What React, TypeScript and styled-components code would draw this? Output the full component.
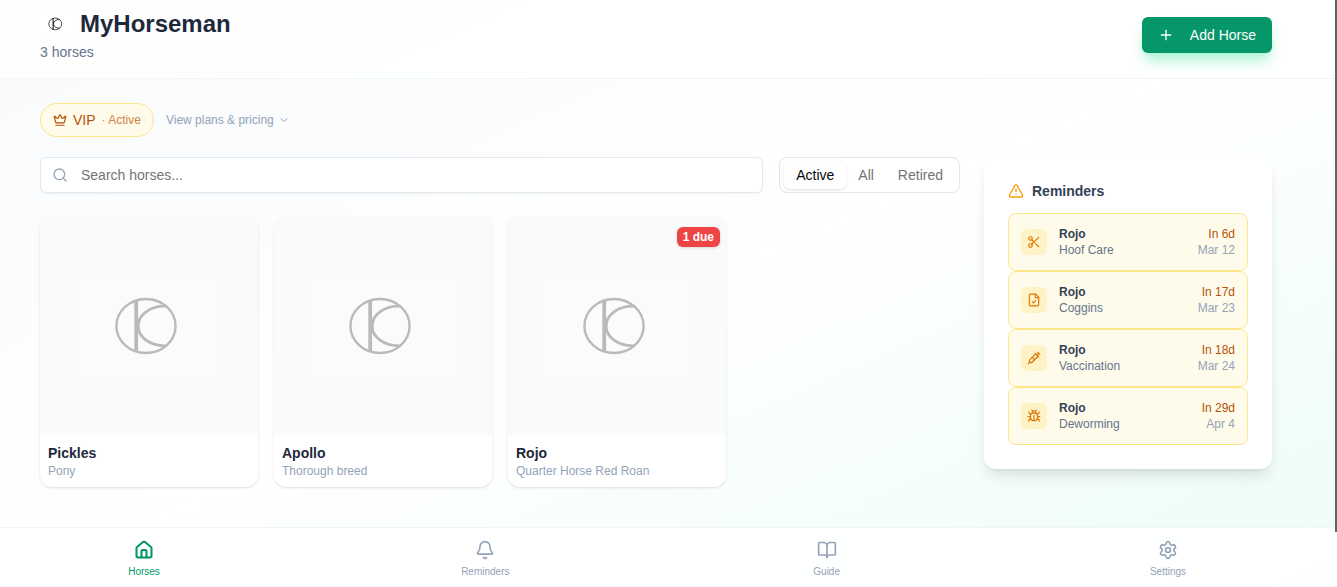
import React, { useState } from "react";
import styled, { createGlobalStyle, css } from "styled-components";
import {
  Bell,
  BookOpen,
  Bug,
  ChevronDown,
  Crown,
  FileCheck,
  House,
  Plus,
  Scissors,
  Search,
  Settings,
  Syringe,
  TriangleAlert,
  type LucideIcon,
} from "lucide-react";

const GlobalStyle = createGlobalStyle`
  *, *::before, *::after { box-sizing: border-box; }
  body {
    margin: 0;
    font-family: "Liberation Sans", Arial, sans-serif;
    font-size: 14px;
    line-height: 20px;
    color: #1e293b;
  }
  h1, h2, h3, p, ul { margin: 0; padding: 0; }
  ul { list-style: none; }
  button, input { font: inherit; }
  svg { display: block; flex: none; }
`;

const Page = styled.div`
  position: relative;
  display: flex;
  flex-direction: column;
  min-height: 100vh;
  background: linear-gradient(to bottom right, #f8fafc, #ffffff 50%, #ecfdf5);
`;

const ScrollThumb = styled.div`
  position: absolute;
  top: 0;
  right: 0;
  bottom: 55px;
  width: 2px;
  background: #5f6363;
`;

const Header = styled.header`
  background: rgba(255, 255, 255, 0.8);
  border-bottom: 1px solid #f1f5f9;
`;

const container = css`
  max-width: 1312px;
  padding-left: 40px;
  padding-right: 40px;
`;

const HeaderInner = styled.div`
  ${container}
  display: flex;
  align-items: center;
  justify-content: space-between;
  padding-top: 8px;
  padding-bottom: 16px;
`;

const Brand = styled.div`
  display: flex;
  align-items: center;
  gap: 8px;
`;

const Title = styled.h1`
  font-size: 24px;
  line-height: 32px;
  font-weight: 700;
`;

const HorseCount = styled.p`
  margin-top: 2px;
  color: #64748b;
`;

const AddButton = styled.button`
  display: flex;
  align-items: center;
  gap: 16px;
  height: 36px;
  padding: 0 16px;
  border: 0;
  border-radius: 6px;
  background: #059669;
  color: #ffffff;
  box-shadow: 0 10px 15px -3px #a7f3d0, 0 4px 6px -4px #a7f3d0;
`;

const Main = styled.main`
  ${container}
  flex: 1;
  width: 100%;
  padding-top: 24px;
  padding-bottom: 40px;
`;

const PlanRow = styled.div`
  display: flex;
  align-items: center;
  gap: 12px;
  margin-bottom: 20px;
`;

const PlanPill = styled.div`
  display: flex;
  align-items: center;
  gap: 6px;
  height: 34px;
  padding: 0 12px;
  border: 1px solid #fde68a;
  border-radius: 17px;
  background: #fffbeb;
  color: #b45309;
`;

const PlanStatus = styled.span`
  font-size: 12px;
  color: #cd853f;
`;

const PlansLink = styled.a`
  display: flex;
  align-items: center;
  gap: 4px;
  font-size: 12px;
  color: #94a3b8;
  text-decoration: none;
`;

const Columns = styled.div`
  display: grid;
  grid-template-columns: minmax(0, 1fr) 288px;
  align-items: start;
  gap: 24px;
`;

const Toolbar = styled.div`
  display: flex;
  gap: 16px;
  margin-bottom: 24px;
`;

const SearchField = styled.label`
  display: flex;
  flex: 1;
  align-items: center;
  gap: 13px;
  height: 36px;
  padding: 0 12px 0 11px;
  border: 1px solid #e2e8f0;
  border-radius: 6px;
  background: #ffffff;
  color: #94a3b8;
  box-shadow: 0 1px 2px rgba(0, 0, 0, 0.05);
`;

const SearchInput = styled.input`
  flex: 1;
  min-width: 0;
  padding: 0;
  border: 0;
  outline: 0;
  background: transparent;
  color: #1e293b;

  &::placeholder {
    color: #757575;
  }
`;

const Tabs = styled.div`
  display: flex;
  height: 36px;
  padding: 3px 4px;
  border: 1px solid #e5e5e5;
  border-radius: 8px;
  background: #ffffff;
`;

const Tab = styled.button<{ $active: boolean }>`
  padding: 0 12px;
  border: 0;
  border-radius: 6px;
  background: ${({ $active }) => ($active ? "#ffffff" : "transparent")};
  color: ${({ $active }) => ($active ? "#0a0a0a" : "#737373")};
  box-shadow: ${({ $active }) =>
    $active ? "0 1px 3px rgba(0, 0, 0, 0.1), 0 1px 2px -1px rgba(0, 0, 0, 0.1)" : "none"};
`;

const HorseGrid = styled.div`
  display: grid;
  grid-template-columns: repeat(4, minmax(0, 1fr));
  gap: 16px;
`;

const HorseCard = styled.article`
  position: relative;
  overflow: hidden;
  border-radius: 12px;
  background: #ffffff;
  box-shadow: 0 1px 3px rgba(0, 0, 0, 0.1), 0 1px 2px -1px rgba(0, 0, 0, 0.1);
`;

const HorsePhoto = styled.div`
  display: flex;
  align-items: center;
  justify-content: center;
  aspect-ratio: 1;
  background: #f8fafc;
`;

const HorseInfo = styled.div`
  padding: 8px;
`;

const HorseName = styled.h3`
  font-size: 14px;
  line-height: 20px;
  font-weight: 700;
`;

const HorseBreed = styled.p`
  font-size: 12px;
  line-height: 16px;
  color: #94a3b8;
`;

const DueBadge = styled.span`
  position: absolute;
  top: 10px;
  right: 6px;
  padding: 0 6px;
  border-radius: 6px;
  background: #ef4444;
  color: #ffffff;
  font-size: 12px;
  line-height: 20px;
  font-weight: 700;
  box-shadow: 0 1px 3px rgba(0, 0, 0, 0.15);
`;

const ReminderPanel = styled.aside`
  padding: 24px;
  border-radius: 12px;
  background: #ffffff;
  box-shadow: 0 10px 15px -3px rgba(0, 0, 0, 0.1), 0 4px 6px -4px rgba(0, 0, 0, 0.1);
`;

const PanelTitle = styled.h2`
  display: flex;
  align-items: center;
  gap: 8px;
  margin-bottom: 12px;
  font-size: 14px;
  line-height: 20px;
  font-weight: 700;
  color: #334155;

  svg {
    color: #f59e0b;
  }
`;

const Reminder = styled.li`
  display: flex;
  align-items: center;
  gap: 12px;
  padding: 12px;
  border: 1px solid #fde68a;
  border-radius: 8px;
  background: #fffbeb;
  font-size: 12px;
  line-height: 16px;
`;

const ReminderIcon = styled.span`
  display: flex;
  align-items: center;
  justify-content: center;
  width: 26px;
  height: 26px;
  border-radius: 6px;
  background: #fef3c7;
  color: #d97706;
`;

const ReminderText = styled.div`
  flex: 1;
  color: #64748b;
`;

const ReminderHorse = styled.p`
  font-weight: 700;
  color: #334155;
`;

const ReminderDate = styled.div`
  text-align: right;
  color: #94a3b8;
`;

const ReminderDue = styled.p`
  color: #b45309;
`;

const BottomNav = styled.nav`
  border-top: 1px solid #f1f5f9;
  background: rgba(255, 255, 255, 0.9);
`;

const NavList = styled.ul`
  display: flex;
  justify-content: space-between;
  max-width: 1312px;
  padding: 12px 112px 7px;
`;

const NavLink = styled.a<{ $active: boolean }>`
  display: flex;
  flex-direction: column;
  align-items: center;
  gap: 4px;
  width: 64px;
  font-size: 10px;
  line-height: 16px;
  text-decoration: none;
  color: ${({ $active }) => ($active ? "#059669" : "#94a3b8")};
`;

interface LogoProps {
  width: number;
  height: number;
  color: string;
  tile: string;
  bold?: boolean;
}

function Logo({ width, height, color, tile, bold = false }: LogoProps) {
  return (
    <svg width={width} height={height} viewBox="0 0 147 107" fill="none" stroke={color} aria-hidden="true">
      <rect width="147" height="107" fill={tile} stroke="none" />
      <ellipse cx="70" cy="53" rx="29.6" ry="27" strokeWidth={bold ? 3.4 : 2.4} />
      <path d="M60.2 27.5V78.5" strokeWidth={bold ? 5 : 3.8} />
      <path d="M90.5 33.2C74.5 32.5 62.2 41.5 62.2 53S74.5 73.5 90.5 72.8" strokeWidth={bold ? 4 : 2.8} />
    </svg>
  );
}

const horses = [
  { name: "Pickles", breed: "Pony", due: 0 },
  { name: "Apollo", breed: "Thorough breed", due: 0 },
  { name: "Rojo", breed: "Quarter Horse Red Roan", due: 1 },
];

const reminders: { icon: LucideIcon; horse: string; task: string; due: string; date: string }[] = [
  { icon: Scissors, horse: "Rojo", task: "Hoof Care", due: "In 6d", date: "Mar 12" },
  { icon: FileCheck, horse: "Rojo", task: "Coggins", due: "In 17d", date: "Mar 23" },
  { icon: Syringe, horse: "Rojo", task: "Vaccination", due: "In 18d", date: "Mar 24" },
  { icon: Bug, horse: "Rojo", task: "Deworming", due: "In 29d", date: "Apr 4" },
];

const navItems: { icon: LucideIcon; label: string }[] = [
  { icon: House, label: "Horses" },
  { icon: Bell, label: "Reminders" },
  { icon: BookOpen, label: "Guide" },
  { icon: Settings, label: "Settings" },
];

const filters = ["Active", "All", "Retired"];

export default function App() {
  const [filter, setFilter] = useState("Active");
  const [query, setQuery] = useState("");

  return (
    <Page>
      <GlobalStyle />
      <Header>
        <HeaderInner>
          <div>
            <Brand>
              <Logo width={32} height={24} color="#111111" tile="#ffffff" bold />
              <Title>MyHorseman</Title>
            </Brand>
            <HorseCount>3 horses</HorseCount>
          </div>
          <AddButton type="button">
            <Plus size={16} strokeWidth={2} />
            Add Horse
          </AddButton>
        </HeaderInner>
      </Header>

      <Main>
        <PlanRow>
          <PlanPill>
            <Crown size={14} />
            <span>VIP</span>
            <PlanStatus>· Active</PlanStatus>
          </PlanPill>
          <PlansLink href="#plans">
            View plans &amp; pricing
            <ChevronDown size={12} />
          </PlansLink>
        </PlanRow>

        <Columns>
          <section>
            <Toolbar>
              <SearchField>
                <Search size={16} />
                <SearchInput
                  type="text"
                  aria-label="Search horses"
                  placeholder="Search horses..."
                  value={query}
                  onChange={(e) => setQuery(e.target.value)}
                />
              </SearchField>
              <Tabs role="tablist">
                {filters.map((name) => (
                  <Tab
                    key={name}
                    type="button"
                    role="tab"
                    aria-selected={filter === name}
                    $active={filter === name}
                    onClick={() => setFilter(name)}
                  >
                    {name}
                  </Tab>
                ))}
              </Tabs>
            </Toolbar>

            <HorseGrid>
              {horses.map((horse) => (
                <HorseCard key={horse.name}>
                  <HorsePhoto>
                    <Logo width={147} height={107} color="#bababb" tile="#fafbfc" />
                  </HorsePhoto>
                  {horse.due > 0 && <DueBadge>{horse.due} due</DueBadge>}
                  <HorseInfo>
                    <HorseName>{horse.name}</HorseName>
                    <HorseBreed>{horse.breed}</HorseBreed>
                  </HorseInfo>
                </HorseCard>
              ))}
            </HorseGrid>
          </section>

          <ReminderPanel>
            <PanelTitle>
              <TriangleAlert size={16} />
              Reminders
            </PanelTitle>
            <ul>
              {reminders.map(({ icon: Icon, horse, task, due, date }) => (
                <Reminder key={task}>
                  <ReminderIcon>
                    <Icon size={14} />
                  </ReminderIcon>
                  <ReminderText>
                    <ReminderHorse>{horse}</ReminderHorse>
                    <p>{task}</p>
                  </ReminderText>
                  <ReminderDate>
                    <ReminderDue>{due}</ReminderDue>
                    <p>{date}</p>
                  </ReminderDate>
                </Reminder>
              ))}
            </ul>
          </ReminderPanel>
        </Columns>
      </Main>

      <BottomNav>
        <NavList>
          {navItems.map(({ icon: Icon, label }, i) => (
            <li key={label}>
              <NavLink href={`#${label.toLowerCase()}`} $active={i === 0}>
                <Icon size={20} strokeWidth={i === 0 ? 2.5 : 2} />
                {label}
              </NavLink>
            </li>
          ))}
        </NavList>
      </BottomNav>
      <ScrollThumb />
    </Page>
  );
}
